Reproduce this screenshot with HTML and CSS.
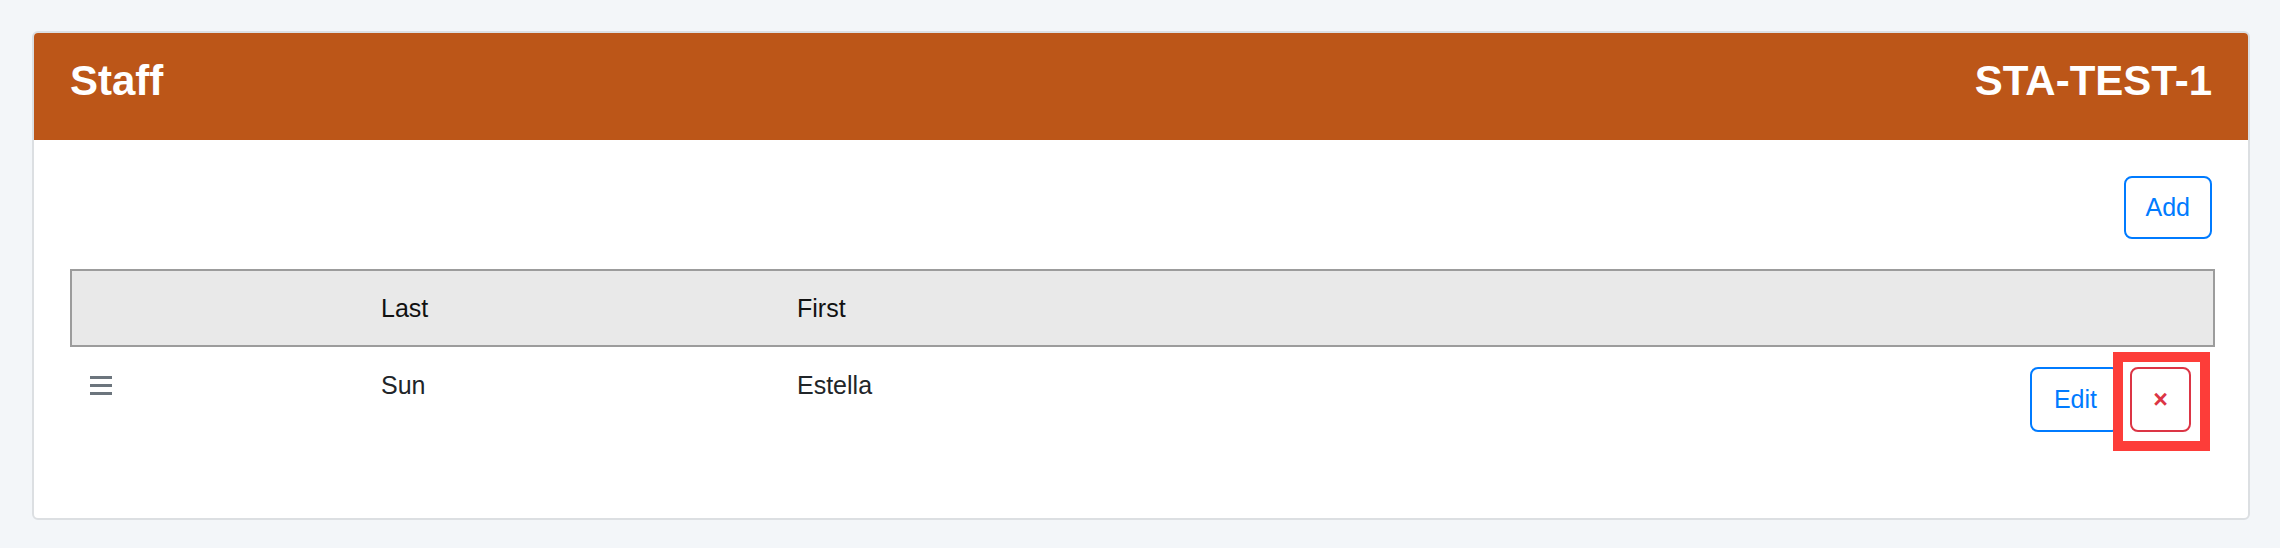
FILE: index.html
```html
<!DOCTYPE html>
<html>
<head>
<meta charset="utf-8">
<link rel="stylesheet" href="styles.css">
</head>
<body>
<div class="page">
  <div class="card">
    <div class="card-header">
      <h1 class="title">Staff</h1>
      <h1 class="title">STA-TEST-1</h1>
    </div>
    <div class="card-body">
      <div class="toolbar">
        <button class="btn btn-blue btn-add">Add</button>
      </div>
      <div class="table">
        <div class="row head">
          <div class="cell"></div>
          <div class="cell">Last</div>
          <div class="cell">First</div>
          <div class="cell"></div>
        </div>
        <div class="row body">
          <div class="cell handle">
            <svg class="bars" width="22" height="19" viewBox="0 0 22 19"><rect x="0" y="0" width="22" height="3"/><rect x="0" y="8" width="22" height="3"/><rect x="0" y="16" width="22" height="3"/></svg>
          </div>
          <div class="cell">Sun</div>
          <div class="cell">Estella</div>
          <div class="cell actions">
            <button class="btn btn-blue btn-edit">Edit</button>
            <div class="del-wrap">
              <button class="btn btn-red">×</button>
              <span class="highlight"></span>
            </div>
          </div>
        </div>
      </div>
    </div>
  </div>
</div>
</body>
</html>
```
FILE: styles.css
```css
* { box-sizing: border-box; }
html, body { margin: 0; padding: 0; }
body {
  background: #f3f6f9;
  font-family: "Liberation Sans", Arial, sans-serif;
  color: #212529;
  width: 2280px;
  height: 548px;
}
.page {
  padding: 31px 30px 0 32px;
}
.card {
  background: #fff;
  border: 2px solid #dcdfe2;
  border-radius: 6px;
  overflow: hidden;
}
.card-header {
  background: #bc5618;
  display: flex;
  justify-content: space-between;
  align-items: flex-start;
  padding: 23px 36px 34px 36px;
}
.title {
  margin: 0;
  color: #fff;
  font-size: 42px;
  line-height: 50px;
  font-weight: 700;
}
.card-body {
  padding: 36px 33px 66px 36px;
}
.toolbar {
  display: flex;
  justify-content: flex-end;
  margin-bottom: 30px;
}
.btn {
  font-family: "Liberation Sans", Arial, sans-serif;
  font-size: 25px;
  line-height: 37px;
  padding: 12px 20px;
  background: #fff;
  border: 2px solid;
  border-radius: 8px;
  cursor: pointer;
}
.btn-add {
  line-height: 35px;
  margin-right: 3px;
}
.btn-edit {
  padding: 12px 21px 12px 22px;
}
.btn-blue { color: #007bff; border-color: #007bff; }
.btn-red {
  color: #dc3545;
  border-color: #dc3545;
  width: 61px;
  padding: 12px 0;
  font-weight: 700;
}
.table {
  font-size: 25px;
  line-height: 37px;
}
.row {
  display: grid;
  grid-template-columns: 291px 416px 1fr auto;
}
.row.head {
  background: #e9e9e9;
  border: 2px solid #9c9c9c;
  color: #111;
}
.row.head .cell {
  padding: 19px 0 18px 18px;
}
.row.body {
  border-left: 2px solid transparent;
  border-right: 2px solid transparent;
  padding: 20px 0 20px 0;
}
.row.body .cell {
  padding-left: 18px;
}
.handle {
  display: flex;
  align-items: center;
  height: 37px;
}
.bars { fill: #6c757d; display: block; }
.actions {
  display: flex;
  align-items: flex-start;
  gap: 10px;
  padding-right: 22px;
}
.del-wrap {
  position: relative;
}
.highlight {
  position: absolute;
  left: -17px;
  top: -15px;
  right: -19px;
  bottom: -19px;
  border: 10px solid #fd3d39;
  pointer-events: none;
}
```
